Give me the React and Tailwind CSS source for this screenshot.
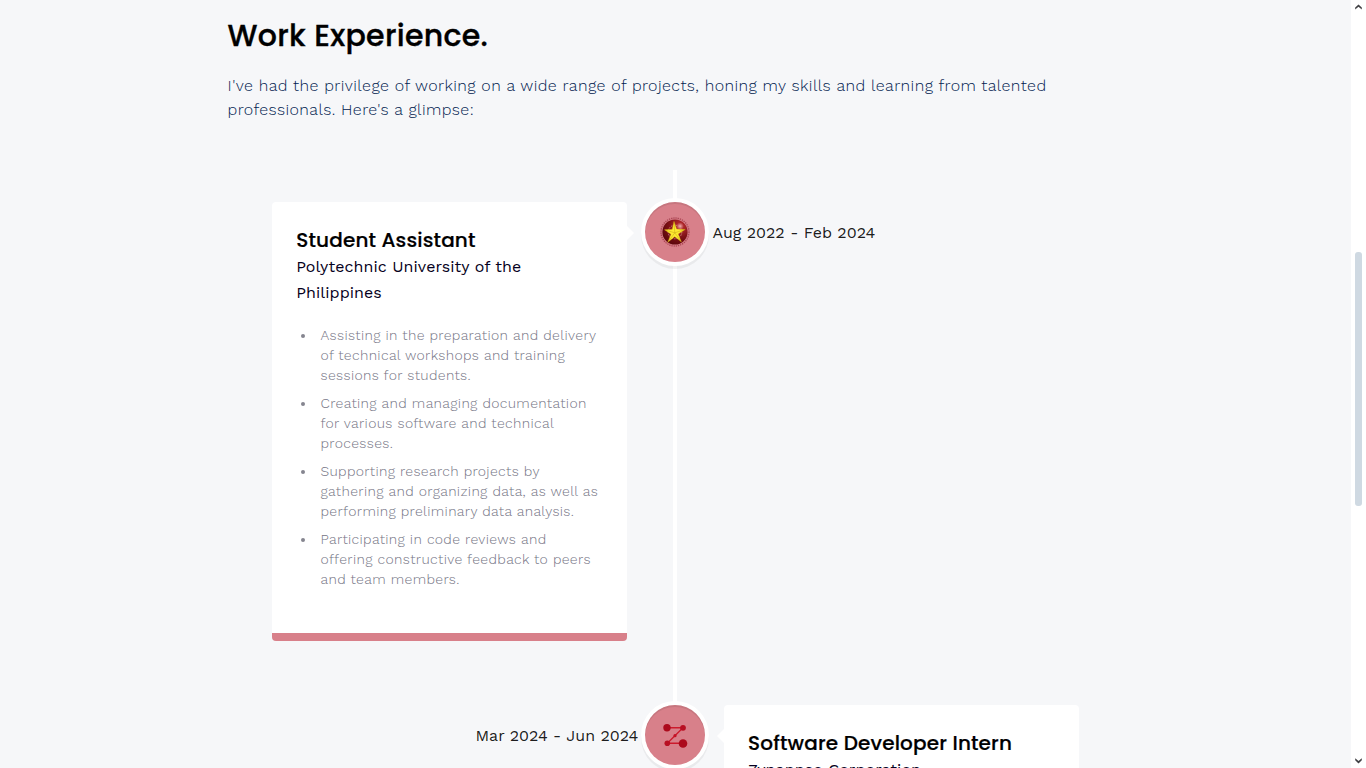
const BULLETS = [
  "Assisting in the preparation and delivery of technical workshops and training sessions for students.",
  "Creating and managing documentation for various software and technical processes.",
  "Supporting research projects by gathering and organizing data, as well as performing preliminary data analysis.",
  "Participating in code reviews and offering constructive feedback to peers and team members.",
];

function SealIcon() {
  return (
    <svg viewBox="0 0 30 30" className="size-[30px]">
      <defs>
        <radialGradient id="seal" cx="0.7" cy="0.27" r="0.75">
          <stop offset="0" stopColor="#f4b0b0" />
          <stop offset="0.2" stopColor="#ac262a" />
          <stop offset="0.6" stopColor="#7d1015" />
          <stop offset="1" stopColor="#5e070c" />
        </radialGradient>
      </defs>
      <circle cx="15" cy="15" r="14" fill="none" stroke="#9c3040" strokeWidth="1.3" strokeDasharray="1.3 0.9" opacity="0.75" />
      <circle cx="15" cy="15" r="12.6" fill="url(#seal)" />
      <circle cx="15" cy="15" r="6.8" fill="none" stroke="#c98a80" strokeWidth="1" strokeDasharray="1.5 1" />
      <path d="M14 4.4 L16.7 12 L25.2 12.4 L18.3 17 L21.3 24.8 L14.7 19.8 L7.8 25.2 L10.9 17.2 L4.6 12.8 L12.2 12.3 Z" fill="#fdea30" stroke="#c8960e" strokeWidth="0.4" />
      <path d="M14 4.4 L14.8 15.8 M25.2 12.4 L14.8 15.8 M21.3 24.8 L14.8 15.8 M7.8 25.2 L14.8 15.8 M4.6 12.8 L14.8 15.8" stroke="#b8920e" strokeWidth="0.4" />
    </svg>
  );
}

function NodesIcon() {
  return (
    <svg viewBox="0 0 30 30" className="size-[30px]">
      <path d="M7 7.8 H23 L7.3 23.3 H23" fill="none" stroke="#cc1a2c" strokeWidth="1.4" />
      <circle cx="7" cy="7.8" r="3.7" fill="#ac0a1c" />
      <circle cx="23" cy="7.8" r="2.9" fill="#b80f22" />
      <circle cx="15" cy="15.7" r="1.6" fill="#c41226" />
      <circle cx="7.3" cy="23.3" r="2.8" fill="#b80f22" />
      <circle cx="23" cy="23.5" r="4.3" fill="#ac0a1c" />
    </svg>
  );
}

function Marker({ children }) {
  return (
    <div className="mx-[18px] flex size-[60px] shrink-0 items-center justify-center rounded-full bg-[#d8808a] shadow-[0_0_0_4px_#fff,inset_0_2px_0_rgba(0,0,0,0.08),0_3px_0_4px_rgba(0,0,0,0.05)]">
      {children}
    </div>
  );
}

const DATE = "font-['Work_Sans','Open_Sans',sans-serif] text-[16px] leading-6 text-black/90";
const JOB = "font-['Poppins','Inter',sans-serif] text-[20px] leading-[26px] font-medium tracking-[0.16px] text-black [-webkit-text-stroke:0.2px_#000]";
const ORG = "mt-px text-[16px] leading-[26px] tracking-[0.06px] text-[#050020]";

export default function App() {
  return (
    <div className="flex h-[768px] w-full overflow-hidden bg-[#f6f7f9] font-['Work_Sans','Open_Sans',sans-serif]">
      <main className="w-[1351px] shrink-0">
        <header className="h-[170px] pt-[12px] pl-[227.6px]">
          <h2 className="font-['Poppins','Inter',sans-serif] text-[30px] leading-[48px] font-medium tracking-[0.3px] text-black [-webkit-text-stroke:0.35px_#000]">Work Experience.</h2>
          <p className="mt-[14px] w-[840px] text-[16px] leading-6 font-light tracking-[0.41px] text-[#00204e]">
            I've had the privilege of working on a wide range of projects, honing my skills and learning from talented professionals. Here's a glimpse:
          </p>
        </header>

        <section className="relative h-[620px] pt-8">
          <div className="absolute top-0 left-[673px] h-full w-1 bg-white" />
          <div className="relative flex h-[439px] items-start pl-[272px]">
            <article className="relative h-[439px] w-[355px] rounded-[4px] border-b-8 border-[#d8808a] bg-white pr-6 pl-[24.2px] pt-[25px]">
              <div className="absolute top-[24px] left-full size-0 border-[7px] border-transparent border-l-white" />
              <h3 className={JOB}>Student Assistant</h3>
              <p className={ORG}>Polytechnic University of the Philippines</p>
              <ul className="mt-[19px] list-disc space-y-2 pl-5 text-[14px] leading-5 font-light tracking-[0.35px] text-[#747484] marker:text-[#85858f]">
                {BULLETS.map((b) => (
                  <li key={b} className="pl-[4.3px]">{b}</li>
                ))}
              </ul>
            </article>
            <Marker><SealIcon /></Marker>
            <span className={"-ml-[10.5px] mt-[19px] " + DATE}>Aug 2022 - Feb 2024</span>
          </div>

          <div className="relative mt-16 flex items-start">
            <span className={"mt-[19px] w-[639px] pr-[0.6px] text-right " + DATE}>Mar 2024 - Jun 2024</span>
            <div className="-ml-[12px]"><Marker><NodesIcon /></Marker></div>
            <article className="relative ml-[1px] h-[200px] w-[355px] rounded-[4px] bg-white px-6 pt-[25px]">
              <div className="absolute top-[24px] right-full size-0 border-[7px] border-transparent border-r-white" />
              <h3 className={JOB}>Software Developer Intern</h3>
              <p className={ORG}>Zynappse Corporation</p>
            </article>
          </div>
        </section>
      </main>

      <div className="flex w-[15px] flex-col items-end bg-white pr-1">
        <div className="h-[252px] pt-[4px]">
          <svg width="7" height="7" viewBox="0 0 7 7">
            <path d="M0.2 5.6 V3.6 L3.5 0.4 L6.8 3.6 V5.6 L3.5 2.8 Z" fill="#404044" />
          </svg>
        </div>
        <div className="h-[254px] w-[7px] rounded-[3px] bg-[#cfd9e2]" />
        <div className="flex flex-1 items-end pb-[4px]">
          <svg width="7" height="7" viewBox="0 0 7 7">
            <path d="M0.2 1.2 V3.2 L3.5 6.4 L6.8 3.2 V1.2 L3.5 4 Z" fill="#404044" />
          </svg>
        </div>
      </div>
    </div>
  );
}
